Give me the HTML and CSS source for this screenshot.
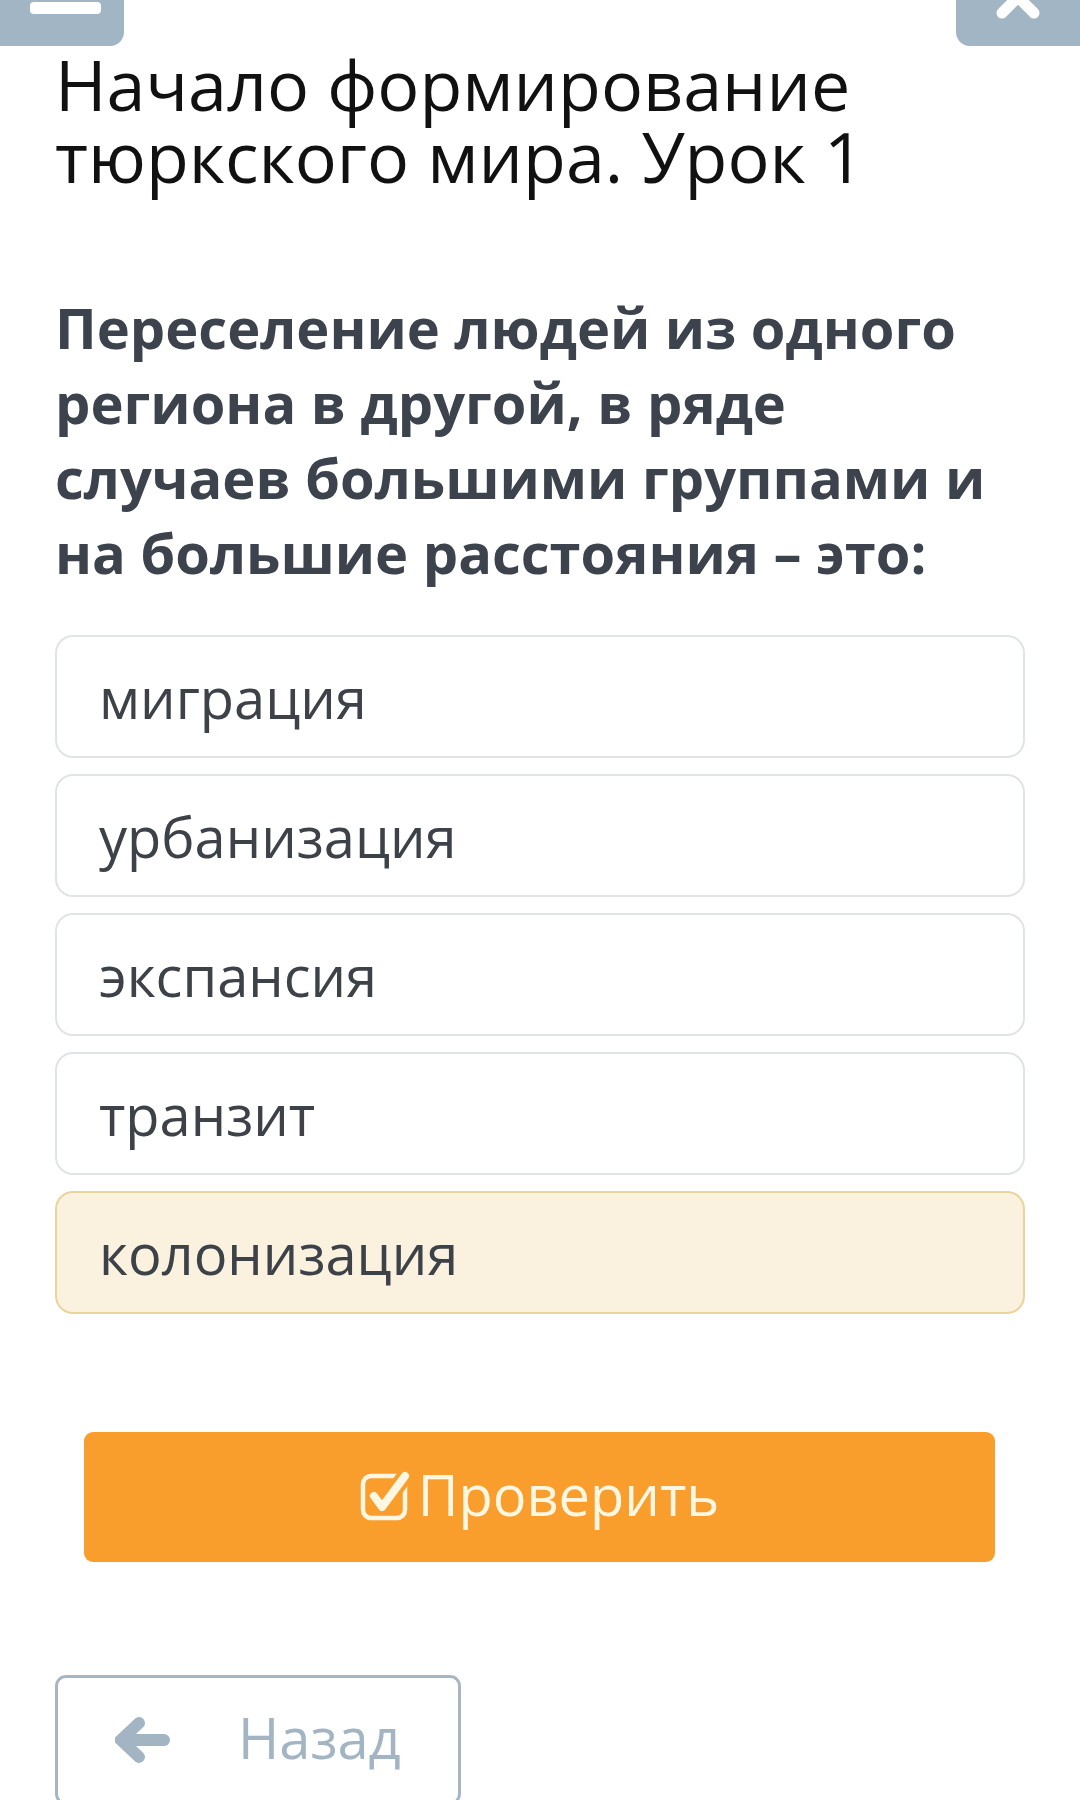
FILE: index.html
```html
<!DOCTYPE html>
<html lang="ru">
<head>
<meta charset="utf-8">
<link rel="stylesheet" href="styles.css">
</head>
<body>
<div class="topbar">
  <div class="tb-btn tb-left"><span class="bar"></span></div>
  <div class="tb-btn tb-right">
    <svg class="x-icon" viewBox="0 0 60 30" width="60" height="30"><path d="M14 -19 L46 13 M46 -19 L14 13" stroke="#fff" stroke-width="11" stroke-linecap="round" fill="none"/></svg>
  </div>
</div>
<main class="content">
  <h1 class="title">Начало формирование тюркского мира. Урок 1</h1>
  <p class="question">Переселение людей из одного региона в другой, в ряде случаев большими группами и на большие расстояния – это:</p>
  <div class="options">
    <div class="option">миграция</div>
    <div class="option">урбанизация</div>
    <div class="option">экспансия</div>
    <div class="option">транзит</div>
    <div class="option selected">колонизация</div>
  </div>
  <button class="check-btn">
    <svg class="check-icon" viewBox="0 0 54 52" width="54" height="52">
      <rect x="3" y="6" width="42" height="42" rx="8" fill="none" stroke="#fff7e2" stroke-width="4.5"/>
      <path d="M14 26 L22 37 L45 6" fill="none" stroke="#f99e2c" stroke-width="16" stroke-linecap="round" stroke-linejoin="round"/>
      <path d="M14 26 L22 37 L45 6" fill="none" stroke="#fff7e2" stroke-width="8" stroke-linecap="round" stroke-linejoin="round"/>
    </svg>
    <span>Проверить</span>
  </button>
  <button class="back-btn">
    <svg class="arrow" viewBox="0 0 56 46" width="56" height="46">
      <path d="M24 6 L6 23 L24 40" fill="none" stroke="#a3b5c2" stroke-width="12" stroke-linecap="round" stroke-linejoin="miter"/>
      <path d="M8 23 L49 23" fill="none" stroke="#a3b5c2" stroke-width="12" stroke-linecap="round"/>
    </svg>
    <span>Назад</span>
  </button>
</main>
</body>
</html>
```
FILE: styles.css
```css
html, body {
  margin: 0;
  padding: 0;
  background: #fff;
}
body {
  font-family: "Open Sans", "Noto Sans", sans-serif;
  width: 1080px;
  height: 1800px;
  overflow: hidden;
}
.topbar {
  display: flex;
  justify-content: space-between;
  height: 46px;
}
.tb-btn {
  width: 124px;
  height: 46px;
  background: #a1b5c4;
  position: relative;
  overflow: hidden;
}
.tb-left {
  border-radius: 0 0 14px 0;
}
.tb-right {
  border-radius: 0 0 0 14px;
}
.bar {
  position: absolute;
  left: 30px;
  top: 2px;
  width: 71px;
  height: 12px;
  border-radius: 4px;
  background: #fff;
}
.x-icon {
  position: absolute;
  left: 32px;
  top: 0;
}
.content {
  padding: 0 55px;
}
.title {
  margin: 2px 0 0;
  font-weight: 400;
  font-size: 70px;
  line-height: 72px;
  color: #111;
}
.question {
  margin: 98px 0 0;
  font-weight: 700;
  font-size: 56px;
  line-height: 75px;
  color: #3c434d;
}
.options {
  margin-top: 45px;
  display: flex;
  flex-direction: column;
  gap: 16px;
}
.option {
  height: 123px;
  box-sizing: border-box;
  border: 2.5px solid #e0e4e6;
  border-radius: 18px;
  display: flex;
  align-items: center;
  padding-left: 42px;
  font-size: 56px;
  color: #3d4148;
}
.option.selected {
  background: #faf2df;
  border-color: #e9d49b;
}
.check-btn {
  display: flex;
  align-items: center;
  justify-content: center;
  gap: 4px;
  margin: 118px 30px 0 29px;
  width: 911px;
  height: 130px;
  background: #f99e2c;
  border: none;
  border-radius: 9px;
  font-family: "Open Sans", sans-serif;
  font-size: 56px;
  color: #fff7e2;
  padding: 0 0 6px;
}
.check-icon {
  margin-top: 4px;
}
.back-btn {
  display: flex;
  align-items: center;
  margin-top: 113px;
  width: 406px;
  height: 130px;
  box-sizing: border-box;
  background: #fff;
  border: 3px solid #a6b7c3;
  border-radius: 11px;
  padding: 0 0 6px 57px;
  gap: 67px;
  font-family: "Open Sans", sans-serif;
  font-size: 56px;
  color: #a3b5c2;
}
.arrow {
  margin-top: 6px;
}
```
